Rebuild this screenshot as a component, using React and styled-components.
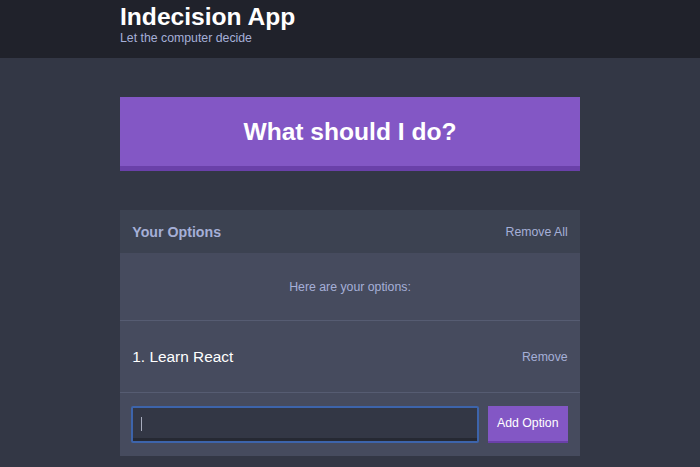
import React from 'react';
import styled, { createGlobalStyle } from 'styled-components';

const GlobalStyle = createGlobalStyle`
  * {
    box-sizing: border-box;
  }

  body {
    margin: 0;
    background: #333745;
    color: #ffffff;
    font-family: 'Liberation Sans', Arial, sans-serif;
  }
`;

const Header = styled.header`
  background: #20222b;
  height: 58px;
  padding-top: 5px;
  margin-bottom: 39px;
`;

const Container = styled.div`
  width: 460px;
  margin: 0 auto;
`;

const Title = styled.h1`
  margin: 0;
  font-size: 24.6px;
  font-weight: bold;
  line-height: 1;
  color: #ffffff;
`;

const Subtitle = styled.h2`
  margin: 2.5px 0 0;
  font-size: 12.3px;
  font-weight: normal;
  line-height: 1;
  color: #a5afd7;
`;

const BigButton = styled.button`
  display: block;
  width: 100%;
  margin: 0 0 39px;
  padding: 18.5px;
  border: none;
  border-bottom: 5px solid #6a40a9;
  background: #8357c5;
  color: #ffffff;
  font-family: inherit;
  font-size: 24.6px;
  font-weight: bold;
  line-height: 32px;
`;

const Widget = styled.div`
  background: #464b5e;
`;

const WidgetHeader = styled.div`
  display: flex;
  align-items: center;
  justify-content: space-between;
  height: 43px;
  padding: 0 12.3px;
  background: #3c4251;
`;

const WidgetTitle = styled.h3`
  margin: 0;
  font-size: 14.2px;
  font-weight: bold;
  color: #a5afd7;
`;

const LinkButton = styled.button`
  padding: 0;
  border: none;
  background: none;
  color: #a5afd7;
  font-family: inherit;
  font-size: 12.3px;
`;

const Message = styled.p`
  display: flex;
  align-items: center;
  justify-content: center;
  height: 68px;
  margin: 0;
  border-bottom: 1px solid #565c72;
  color: #a5afd7;
  font-size: 12.3px;
`;

const OptionRow = styled.div`
  display: flex;
  align-items: center;
  justify-content: space-between;
  height: 72px;
  padding: 0 12.3px;
  border-bottom: 1px solid #565c72;
`;

const OptionText = styled.p`
  margin: 0;
  font-size: 15.4px;
  color: #ffffff;
`;

const Form = styled.form`
  display: flex;
  gap: 8.5px;
  padding: 12.5px 12.3px 13px 11.3px;
`;

const InputWrap = styled.div`
  position: relative;
  flex-grow: 1;
`;

const Input = styled.input`
  display: block;
  width: 100%;
  height: 37.5px;
  padding: 0 9px;
  border: 2px solid #3d64ab;
  border-radius: 2px;
  box-shadow: inset 0 -3px 0 #262933;
  background: #333745;
  color: #a5afd7;
  font-family: inherit;
  font-size: 12.3px;
  outline: none;
`;

const Caret = styled.span`
  position: absolute;
  left: 10px;
  top: 11px;
  width: 1px;
  height: 14px;
  background: #a8acbd;
`;

const AddButton = styled.button`
  width: 80px;
  height: 37.5px;
  padding: 0 9px;
  border: none;
  border-bottom: 2.5px solid #6a40a9;
  background: #8357c5;
  color: #ffffff;
  font-family: inherit;
  font-size: 12.3px;
  font-weight: 500;
`;

const App = () => {
  const options = ['Learn React'];

  return (
    <>
      <GlobalStyle />
      <Header>
        <Container>
          <Title>Indecision App</Title>
          <Subtitle>Let the computer decide</Subtitle>
        </Container>
      </Header>
      <Container>
        <BigButton>What should I do?</BigButton>
        <Widget>
          <WidgetHeader>
            <WidgetTitle>Your Options</WidgetTitle>
            <LinkButton>Remove All</LinkButton>
          </WidgetHeader>
          <Message>Here are your options:</Message>
          {options.map((option, index) => (
            <OptionRow key={option}>
              <OptionText>{index + 1}. {option}</OptionText>
              <LinkButton>Remove</LinkButton>
            </OptionRow>
          ))}
          <Form onSubmit={(e) => e.preventDefault()}>
            <InputWrap>
              <Input type="text" name="option" />
              <Caret />
            </InputWrap>
            <AddButton>Add Option</AddButton>
          </Form>
        </Widget>
      </Container>
    </>
  );
};

export default App;
